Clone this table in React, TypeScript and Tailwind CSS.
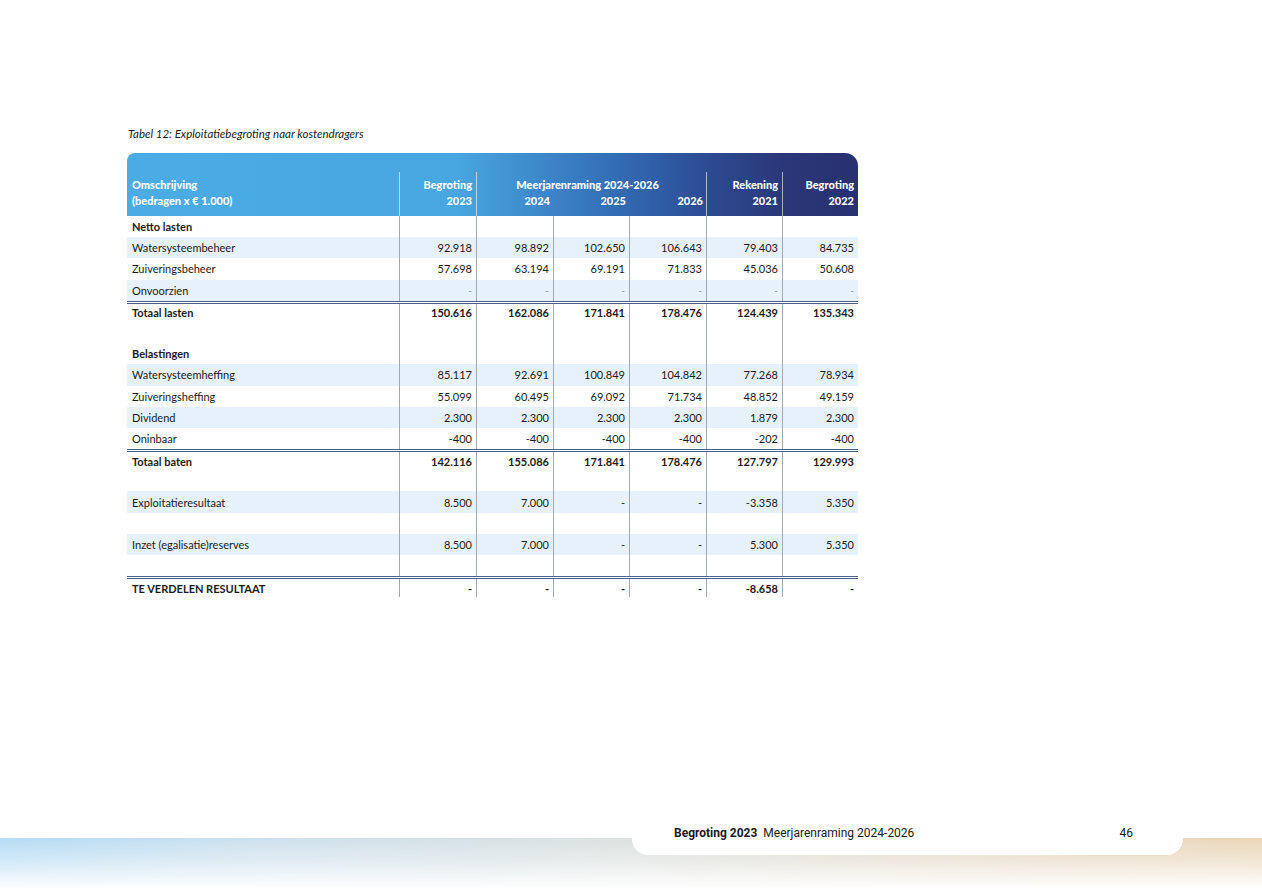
import React from 'react';

type Row = {
  label: string;
  values?: string[];
  bold?: boolean;
  stripe?: boolean;
  doubleTop?: boolean;
  muted?: boolean;
};

const rows: Row[] = [
  { label: 'Netto lasten', bold: true },
  { label: 'Watersysteembeheer', stripe: true, values: ['92.918', '98.892', '102.650', '106.643', '79.403', '84.735'] },
  { label: 'Zuiveringsbeheer', values: ['57.698', '63.194', '69.191', '71.833', '45.036', '50.608'] },
  { label: 'Onvoorzien', stripe: true, muted: true, values: ['-', '-', '-', '-', '-', '-'] },
  { label: 'Totaal lasten', bold: true, doubleTop: true, values: ['150.616', '162.086', '171.841', '178.476', '124.439', '135.343'] },
  { label: '' },
  { label: 'Belastingen', bold: true },
  { label: 'Watersysteemheffing', stripe: true, values: ['85.117', '92.691', '100.849', '104.842', '77.268', '78.934'] },
  { label: 'Zuiveringsheffing', values: ['55.099', '60.495', '69.092', '71.734', '48.852', '49.159'] },
  { label: 'Dividend', stripe: true, values: ['2.300', '2.300', '2.300', '2.300', '1.879', '2.300'] },
  { label: 'Oninbaar', values: ['-400', '-400', '-400', '-400', '-202', '-400'] },
  { label: 'Totaal baten', bold: true, doubleTop: true, values: ['142.116', '155.086', '171.841', '178.476', '127.797', '129.993'] },
  { label: '' },
  { label: 'Exploitatieresultaat', stripe: true, values: ['8.500', '7.000', '-', '-', '-3.358', '5.350'] },
  { label: '' },
  { label: 'Inzet (egalisatie)reserves', stripe: true, values: ['8.500', '7.000', '-', '-', '5.300', '5.350'] },
  { label: '' },
  { label: 'TE VERDELEN RESULTAAT', bold: true, doubleTop: true, values: ['-', '-', '-', '-', '-8.658', '-'] },
];

const cols = 'grid grid-cols-[272px_77px_77px_76px_77px_76px_76px]';

const BodyRow: React.FC<{ row: Row }> = ({ row }) => {
  const values = row.values ?? ['', '', '', '', '', ''];
  return (
    <div
      className={`${cols} h-[21.2px] text-[11px] leading-none text-[#1b1b1b] ${
        row.stripe ? 'bg-[#e7f1fb]' : ''
      } ${row.doubleTop ? 'border-t-[3px] border-double border-[#4b5f8a]' : ''} ${
        row.bold ? 'font-bold' : ''
      }`}
    >
      <div className="flex items-center pl-[5px]">{row.label}</div>
      {values.map((v, i) => (
        <div
          key={i}
          className={`flex items-center justify-end pr-[4px] border-l border-[#a3a9b3] ${
            row.muted ? 'text-[#8a9099] text-[10px]' : ''
          }`}
        >
          {v}
        </div>
      ))}
    </div>
  );
};

export default function App() {
  return (
    <div className="relative h-[892px] w-[1262px] overflow-hidden bg-white font-['Lato',sans-serif] flex flex-col">
      <div className="pl-[127px] pt-[125px] flex-1">
        <p className="text-[11.5px] italic text-[#1b1b1b] pl-[1px] h-[28px]">
          Tabel 12: Exploitatiebegroting naar kostendragers
        </p>

        <div className="w-[731px]">
          <div
            className={`${cols} h-[63px] rounded-tl-[8px] rounded-tr-[13px] bg-[linear-gradient(90deg,#4bace5_0%,#48a6e0_45%,#3c84c7_58%,#3167b0_69%,#2d4c93_79%,#2a3778_90%,#283171_100%)] text-white font-black text-[11px] leading-[16px]`}
          >
            <div className="flex flex-col justify-end pb-[7px] pl-[5px]">
              <span>Omschrijving</span>
              <span>(bedragen x € 1.000)</span>
            </div>
            <div className="mt-[19px] border-l border-white/60 flex flex-col justify-end items-end pb-[7px] pr-[4px]">
              <span>Begroting</span>
              <span>2023</span>
            </div>
            <div className="col-span-3 mt-[19px] border-l border-white/60 flex flex-col justify-end pb-[7px]">
              <span className="text-center pr-[8px]">Meerjarenraming 2024-2026</span>
              <div className="grid grid-cols-[77px_76px_77px]">
                <span className="text-right pr-[4px]">2024</span>
                <span className="text-right pr-[4px]">2025</span>
                <span className="text-right pr-[4px]">2026</span>
              </div>
            </div>
            <div className="mt-[19px] border-l border-white/60 flex flex-col justify-end items-end pb-[7px] pr-[4px]">
              <span>Rekening</span>
              <span>2021</span>
            </div>
            <div className="mt-[19px] border-l border-white/60 flex flex-col justify-end items-end pb-[7px] pr-[4px]">
              <span>Begroting</span>
              <span>2022</span>
            </div>
          </div>

          {rows.map((row, i) => (
            <BodyRow key={i} row={row} />
          ))}
        </div>
      </div>

      <div className="relative h-[54px] bg-[linear-gradient(90deg,#b6dcf4_0%,#cde1ee_20%,#dce1df_50%,#e6dbc9_75%,#ead7ba_100%)]">
        <div className="absolute inset-0 bg-[linear-gradient(180deg,rgba(255,255,255,0)_0%,rgba(255,255,255,0.4)_45%,#ffffff_95%)]" />
        <div className="absolute left-[632px] top-[-24px] w-[551px] h-[41px] bg-white rounded-b-[16px] flex items-center pl-[42px] pr-[50px] pb-[4px] text-[12px] text-[#1b1b1b] font-['Roboto',sans-serif]">
          <span className="font-bold">Begroting 2023</span>
          <span className="ml-[6px]">Meerjarenraming 2024-2026</span>
          <span className="ml-auto">46</span>
        </div>
      </div>
    </div>
  );
}
